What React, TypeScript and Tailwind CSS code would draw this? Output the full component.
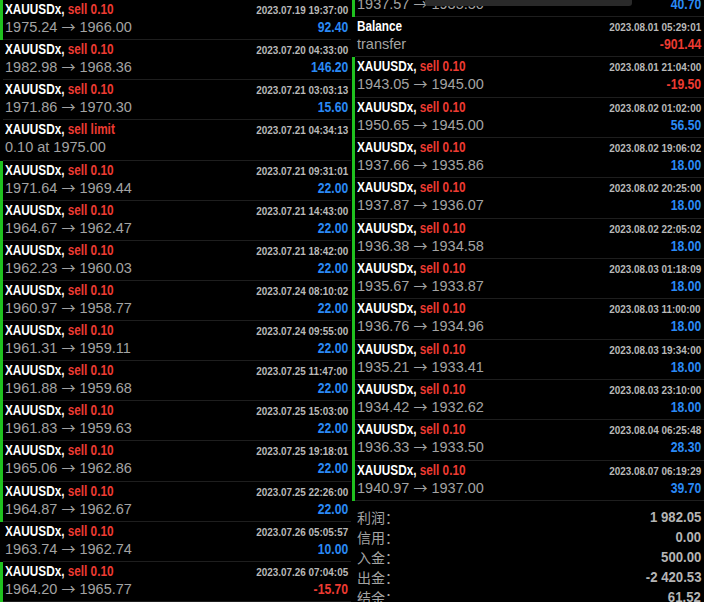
import type { ReactNode } from "react"

type Deal = {
  symbol: string
  kind: string
  date: string
  line: string
  profit?: string
  bar?: boolean
}

// no narrow face is installed, so the condensed bold text is squeezed with scale-x
const BOLD = "font-['Liberation_Sans',Arial,sans-serif] font-bold inline-block"
const SANS = "font-['Liberation_Sans',Arial,sans-serif]"

const sell = (date: string, line: string, profit: string, bar = true): Deal => ({
  symbol: "XAUUSDx,",
  kind: "sell 0.10",
  date,
  line,
  profit,
  bar,
})

const LEFT: Deal[] = [
  sell("2023.07.19 19:37:00", "1975.24 → 1966.00", "92.40"),
  sell("2023.07.20 04:33:00", "1982.98 → 1968.36", "146.20", false),
  sell("2023.07.21 03:03:13", "1971.86 → 1970.30", "15.60", false),
  { symbol: "XAUUSDx,", kind: "sell limit", date: "2023.07.21 04:34:13", line: "0.10 at 1975.00" },
  sell("2023.07.21 09:31:01", "1971.64 → 1969.44", "22.00"),
  sell("2023.07.21 14:43:00", "1964.67 → 1962.47", "22.00"),
  sell("2023.07.21 18:42:00", "1962.23 → 1960.03", "22.00"),
  sell("2023.07.24 08:10:02", "1960.97 → 1958.77", "22.00"),
  sell("2023.07.24 09:55:00", "1961.31 → 1959.11", "22.00"),
  sell("2023.07.25 11:47:00", "1961.88 → 1959.68", "22.00"),
  sell("2023.07.25 15:03:00", "1961.83 → 1959.63", "22.00"),
  sell("2023.07.25 19:18:01", "1965.06 → 1962.86", "22.00"),
  sell("2023.07.25 22:26:00", "1964.87 → 1962.67", "22.00"),
  sell("2023.07.26 05:05:57", "1963.74 → 1962.74", "10.00", false),
  sell("2023.07.26 07:04:05", "1964.20 → 1965.77", "-15.70"),
]

const RIGHT: Deal[] = [
  { symbol: "Balance", kind: "", date: "2023.08.01 05:29:01", line: "transfer", profit: "-901.44" },
  sell("2023.08.01 21:04:00", "1943.05 → 1945.00", "-19.50"),
  sell("2023.08.02 01:02:00", "1950.65 → 1945.00", "56.50"),
  sell("2023.08.02 19:06:02", "1937.66 → 1935.86", "18.00"),
  sell("2023.08.02 20:25:00", "1937.87 → 1936.07", "18.00"),
  sell("2023.08.02 22:05:02", "1936.38 → 1934.58", "18.00"),
  sell("2023.08.03 01:18:09", "1935.67 → 1933.87", "18.00"),
  sell("2023.08.03 11:00:00", "1936.76 → 1934.96", "18.00"),
  sell("2023.08.03 19:34:00", "1935.21 → 1933.41", "18.00"),
  sell("2023.08.03 23:10:00", "1934.42 → 1932.62", "18.00"),
  sell("2023.08.04 06:25:48", "1936.33 → 1933.50", "28.30"),
  sell("2023.08.07 06:19:29", "1940.97 → 1937.00", "39.70"),
]

const SUMMARY = [
  ["利润：", "1 982.05"],
  ["信用：", "0.00"],
  ["入金：", "500.00"],
  ["出金：", "-2 420.53"],
  ["结余：", "61.52"],
]

function PriceLine({ text }: { text: string }) {
  const parts = text.split(" → ")
  if (parts.length < 2) return <>{text}</>
  return (
    <>
      {parts[0]}{" "}
      <span className="font-['Noto_Sans_CJK_SC',sans-serif] text-[14px] leading-none">→</span> {parts[1]}
    </>
  )
}

function Row({ deal, height, extra }: { deal: Deal; height: string; extra?: string }) {
  const negative = deal.profit?.startsWith("-")
  return (
    <div className={`flex ${height} ${extra ?? ""}`}>
      <div className={`w-[3px] shrink-0 ${deal.bar ? "bg-[#1fc21f]" : "bg-transparent"}`} />
      <div className="flex min-w-0 flex-1 flex-col border-b border-[#1e1e1e] pr-[3px] pl-[2px]">
        <div className="flex h-[18px] items-baseline justify-between leading-[18px]">
          <span className={`${BOLD} origin-left scale-x-[0.84] text-[14px] whitespace-nowrap text-white`}>
            {deal.symbol}
            {deal.kind && <span className="text-[#ee3b32]"> {deal.kind}</span>}
          </span>
          <span className={`${BOLD} origin-right scale-x-[0.9] text-[11px] text-[#b9b9b9]`}>
            {deal.date}
          </span>
        </div>
        <div className="flex h-[18px] items-baseline justify-between leading-[18px]">
          <span className={`${SANS} text-[14.5px] whitespace-nowrap text-[#a3a3a3]`}>
            <PriceLine text={deal.line} />
          </span>
          {deal.profit && (
            <span
              className={`${BOLD} origin-right scale-x-[0.84] text-[14.5px] ${negative ? "text-[#ee3b32]" : "text-[#2a8af6]"}`}
            >
              {deal.profit}
            </span>
          )}
        </div>
      </div>
    </div>
  )
}

function Column({ children, className }: { children: ReactNode; className?: string }) {
  return <div className={`flex h-full flex-col overflow-hidden ${className ?? ""}`}>{children}</div>
}

export default function App() {
  return (
    <div className="relative grid h-[602px] w-[704px] grid-cols-[351px_353px] overflow-hidden bg-black">
      <Column>
        {LEFT.map((d) => (
          <Row key={d.date} deal={d} height="h-[40.13px] shrink-0" />
        ))}
      </Column>

      <Column className="pl-[1px]">
        <Row
          deal={sell("2023.07.31 22:10:00", "1937.57 → 1935.50", "40.70")}
          height="h-[40.33px] shrink-0"
          extra="-mt-[23.33px]"
        />
        {RIGHT.map((d) => (
          <Row key={d.date} deal={d} height="h-[40.33px] shrink-0" />
        ))}
        <div className="flex flex-col pt-[6px] pr-[3px] pl-[5px]">
          {SUMMARY.map(([label, value]) => (
            <div key={label} className="flex h-[20px] items-center justify-between">
              <span className="font-['Noto_Sans_CJK_SC',sans-serif] text-[14px] leading-[20px] text-[#a3a3a3]">
                {label}
              </span>
              <span
                className={`${BOLD} origin-right scale-x-[0.85] text-[15.5px] leading-[20px] text-[#b5b5b5]`}
              >
                {value}
              </span>
            </div>
          ))}
        </div>
      </Column>

      <div className="absolute top-0 left-[425px] h-[6px] w-[207px] rounded-b-[3px] bg-[#2a2a2a]" />
    </div>
  )
}
